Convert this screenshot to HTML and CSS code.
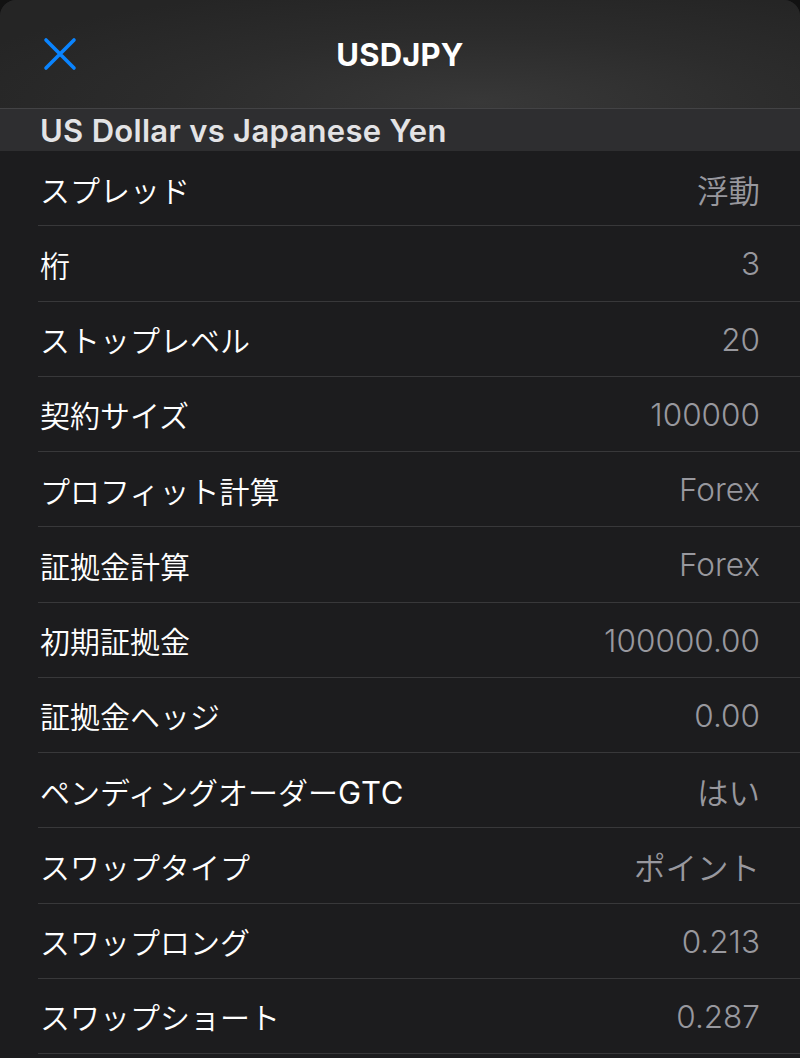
FILE: index.html
```html
<!DOCTYPE html>
<html lang="ja">
<head>
<meta charset="utf-8">
<link rel="stylesheet" href="styles.css">
</head>
<body>
<div class="sheet">
  <header class="topbar">
    <button class="close" aria-label="close">
      <svg width="34" height="34" viewBox="0 0 34 34"><path d="M3 3 L31 31 M31 3 L3 31" stroke="#0a84ff" stroke-width="3.6" stroke-linecap="round" fill="none"/></svg>
    </button>
    <h1 class="title">USDJPY</h1>
  </header>
  <div class="section">US Dollar vs Japanese Yen</div>
  <ul class="list">
    <li class="row"><span class="label">スプレッド</span><span class="value">浮動</span></li>
    <li class="row"><span class="label">桁</span><span class="value">3</span></li>
    <li class="row"><span class="label">ストップレベル</span><span class="value">20</span></li>
    <li class="row"><span class="label">契約サイズ</span><span class="value">100000</span></li>
    <li class="row"><span class="label">プロフィット計算</span><span class="value">Forex</span></li>
    <li class="row"><span class="label">証拠金計算</span><span class="value">Forex</span></li>
    <li class="row"><span class="label">初期証拠金</span><span class="value">100000.00</span></li>
    <li class="row"><span class="label">証拠金ヘッジ</span><span class="value">0.00</span></li>
    <li class="row"><span class="label">ペンディングオーダー<span class="latin">GTC</span></span><span class="value">はい</span></li>
    <li class="row"><span class="label">スワップタイプ</span><span class="value">ポイント</span></li>
    <li class="row"><span class="label">スワップロング</span><span class="value">0.213</span></li>
    <li class="row"><span class="label">スワップショート</span><span class="value">0.287</span></li>
  </ul>
</div>
</body>
</html>
```
FILE: styles.css
```css
* { box-sizing: border-box; }
html, body {
  margin: 0;
  padding: 0;
  background: #121212;
  height: 1058px;
  overflow: hidden;
}
body {
  font-family: Inter, "Noto Sans CJK JP", sans-serif;
}
.sheet {
  background: #1c1c1e;
  border-radius: 16px 16px 0 0;
  overflow: hidden;
  min-height: 1058px;
}
.topbar {
  height: 108px;
  display: flex;
  align-items: center;
  justify-content: center;
  position: relative;
  background: radial-gradient(ellipse 70% 110% at 60% 95%, #383838 0%, #2c2c2c 55%, #252525 100%);
}
.close {
  position: absolute;
  left: 43px;
  top: 37px;
  width: 34px;
  height: 34px;
  padding: 0;
  border: 0;
  background: none;
  display: block;
}
.close svg { display: block; }
.title {
  margin: 0;
  color: #ffffff;
  font-size: 31px;
  font-weight: 700;
  letter-spacing: 0.2px;
}
.section {
  height: 43px;
  background: #2e2e30;
  border-top: 1px solid #434345;
  color: #e3e3e5;
  font-size: 31px;
  font-weight: 600;
  padding-left: 40px;
  display: flex;
  align-items: center;
  letter-spacing: 0.3px;
}
.list {
  list-style: none;
  margin: 0;
  padding: 0;
}
.row {
  height: 75.25px;
  margin-left: 38px;
  padding: 1px 40px 0 2px;
  border-bottom: 1.5px solid #38383a;
  display: flex;
  align-items: center;
  justify-content: space-between;
  font-size: 30px;
}
.label {
  color: #ffffff;
  font-weight: 350;
}
.latin {
  font-size: 31px;
  font-weight: 400;
  letter-spacing: 0.8px;
}
.value {
  color: #98989e;
  font-size: 31.5px;
  font-weight: 350;
}
```
